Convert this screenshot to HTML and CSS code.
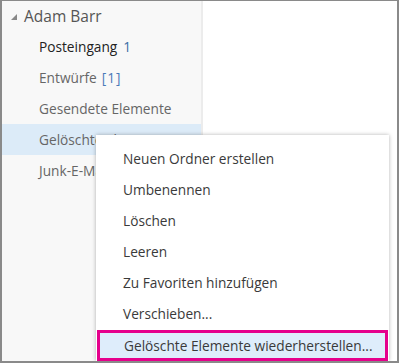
FILE: index.html
```html
<!DOCTYPE html>
<html>
<head>
<meta charset="utf-8">
<link rel="stylesheet" href="styles.css">
</head>
<body>
<div class="frame">
  <div class="sidebar">
    <div class="row account"><span class="tri"></span><span>Adam Barr</span></div>
    <div class="row folder strong">Posteingang <span class="count">1</span></div>
    <div class="row folder">Entwürfe <span class="draft">[1]</span></div>
    <div class="row folder">Gesendete Elemente</div>
    <div class="row folder selected">Gelöschte Elemente</div>
    <div class="row folder">Junk-E-Mail</div>
  </div>
  <div class="main"></div>
  <div class="menu">
    <div class="item">Neuen Ordner erstellen</div>
    <div class="item">Umbenennen</div>
    <div class="item">Löschen</div>
    <div class="item">Leeren</div>
    <div class="item">Zu Favoriten hinzufügen</div>
    <div class="item">Verschieben...</div>
    <div class="item hot">Gelöschte Elemente wiederherstellen...</div>
  </div>
</div>
</body>
</html>
```
FILE: styles.css
```css
html, body { margin: 0; padding: 0; background: #fff; }
.frame {
  position: relative;
  width: 399px; height: 363px;
  box-sizing: border-box;
  border: 2px solid #8a8a8a;
  border-top-width: 1px;
  display: flex;
  overflow: hidden;
  font-family: "Open Sans", "Noto Sans", sans-serif;
  font-size: 13.7px;
  color: #444;
}
.sidebar {
  width: 199px;
  background: #f8f8f8;
  border-right: 2px solid #ececec;
  flex: none;
}
.main { flex: 1; background: #fff; }
.row { height: 31px; display: flex; align-items: center; white-space: nowrap; }
.account { padding-left: 9px; margin-top: -1px; color: #555; font-size: 15.5px; }
.tri {
  width: 0; height: 0;
  border-style: solid;
  border-width: 0 0 6px 6px;
  border-color: transparent transparent #888 transparent;
  margin-right: 7px;
  margin-top: 3px;
}
.folder { padding-left: 37px; color: #666; }
.strong { color: #222; }
.count { color: #3a6ea5; margin-left: 6px; }
.draft { color: #4a7ab8; margin-left: 5px; letter-spacing: 1px; }
.selected { background: #dcebf8; }
.menu {
  position: absolute;
  left: 94px; top: 134px;
  width: 293px;
  background: #fff;
  padding-top: 8px;
  box-shadow: 0 0 4px rgba(0,0,0,0.3);
}
.item {
  height: 31px; display: flex; align-items: center;
  padding-left: 27px; color: #3a3a3a; white-space: nowrap;
  box-sizing: border-box;
}
.item.hot {
  background: #deedfb;
  border: 3px solid #e5008c;
  padding-left: 24px;
  width: 291px;
  margin-left: 1px;
  margin-top: 1px;
}
```
